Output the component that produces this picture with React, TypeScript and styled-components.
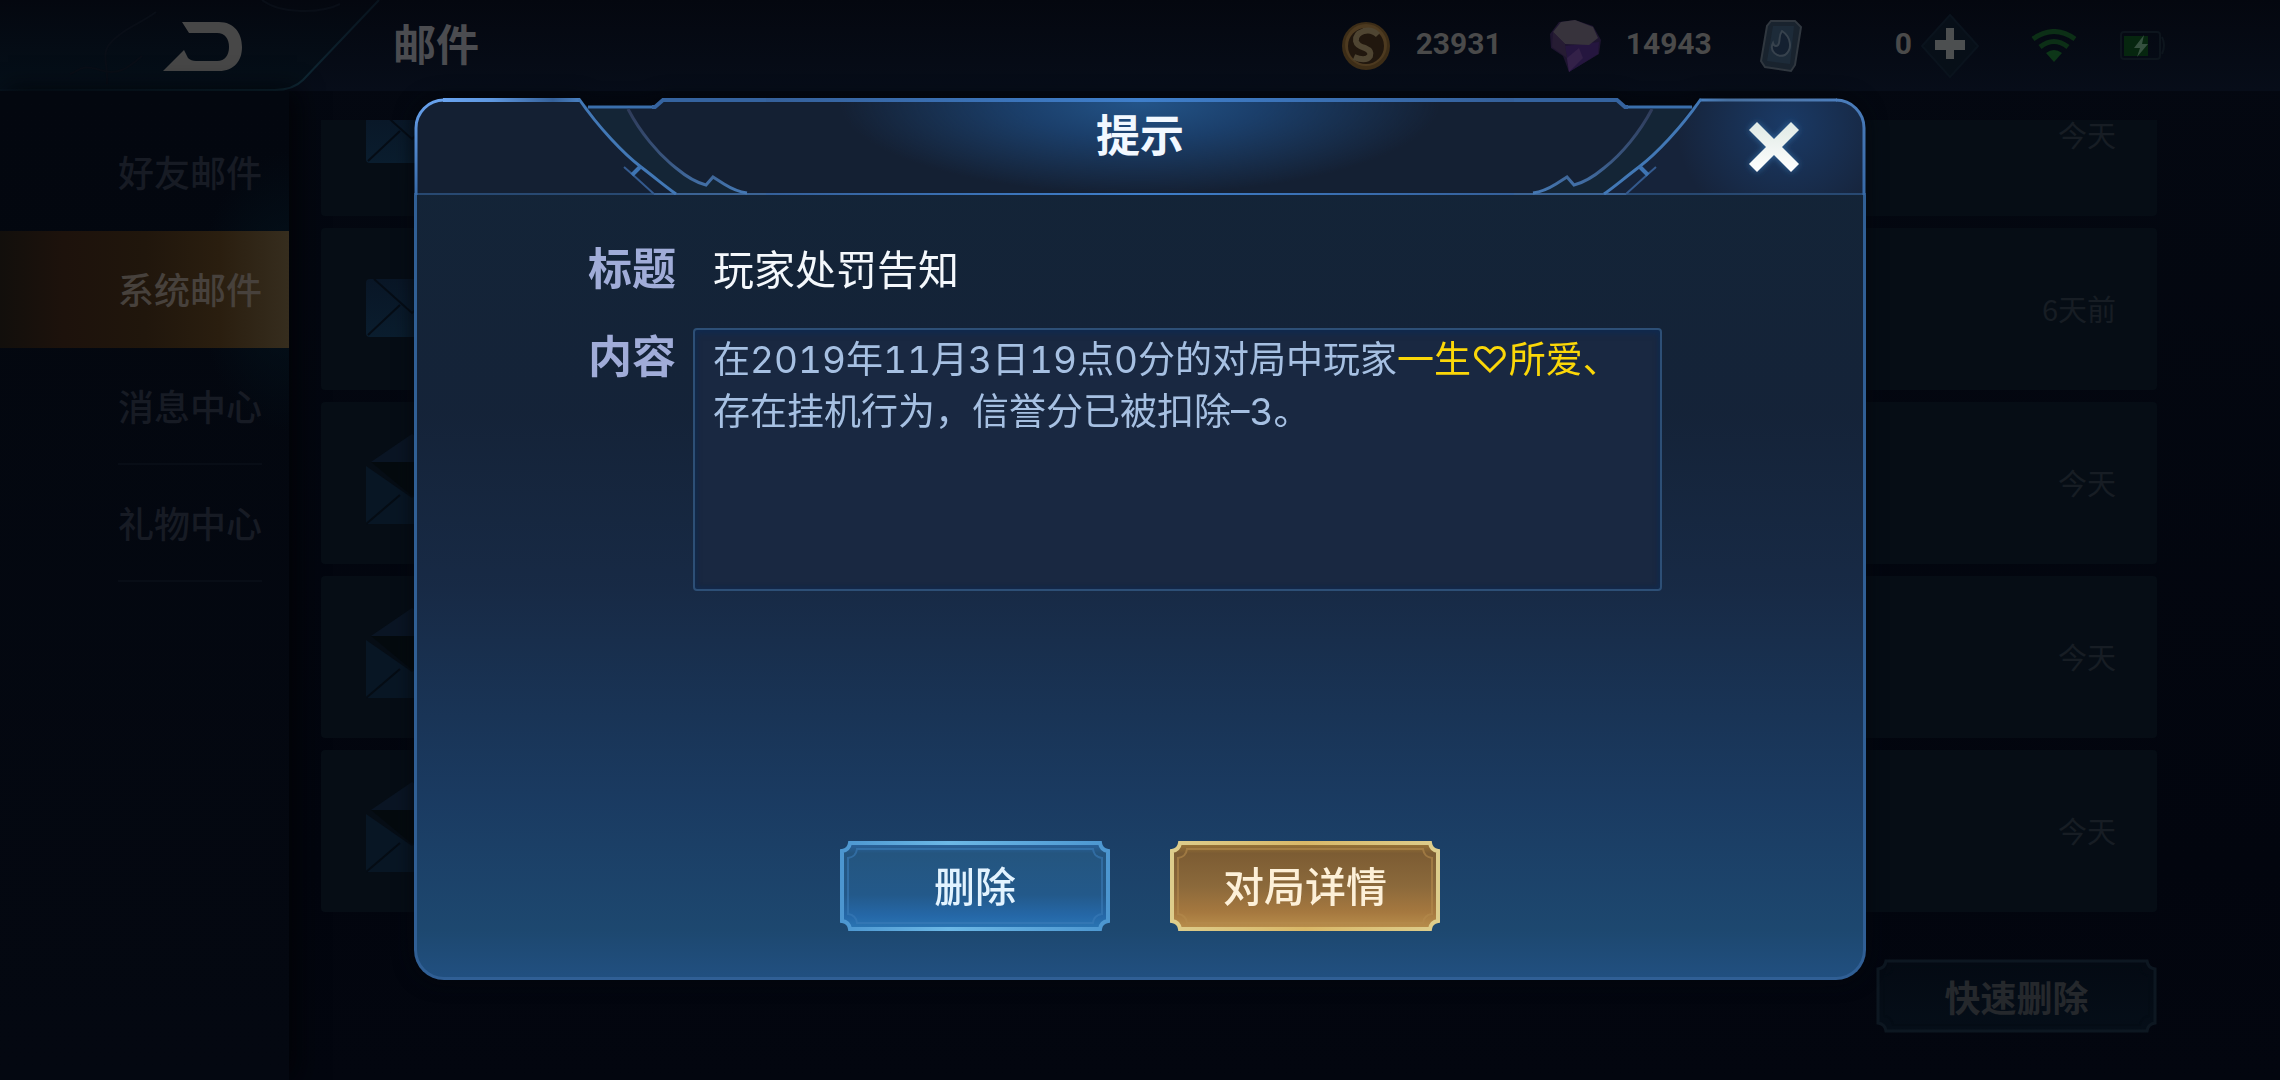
import React from "react";
import styled, { createGlobalStyle } from "styled-components";

const uiFont = `Roboto, "Noto Sans CJK SC", sans-serif`;
const textFont = `Inter, "Noto Sans CJK SC", sans-serif`;

const GlobalStyle = createGlobalStyle`
  * { box-sizing: border-box; }
  html { background: #03060f; }
  body { margin: 0; font-family: ${uiFont}; }
  button { font-family: inherit; border: 0; padding: 0; background: none; cursor: pointer; }
  h1, h2, p, ul { margin: 0; padding: 0; }
  svg { display: block; }
`;

const Page = styled.div`
  min-height: 100vh;
  display: flex;
  flex-direction: column;
  overflow: hidden;
  background: linear-gradient(180deg, #040811, #02050e 80%, #03060f);
`;

/* ---------- top bar ---------- */

const TopBar = styled.header`
  display: flex;
  align-items: center;
  height: 91px;
  padding-right: 114px;
  background: linear-gradient(180deg, #04070f, #070d19);
`;

const BackButton = styled.button`
  flex: none;
  width: 393px;
  height: 91px;
`;

const PageTitle = styled.h1`
  flex: 1;
  font-size: 43px;
  line-height: 60px;
  font-weight: 700;
  color: #4b4c50;
`;

const Wallet = styled.ul`
  display: flex;
  align-items: center;
  gap: 47px;
  list-style: none;
`;

const Currency = styled.li<{ $gap: number }>`
  display: flex;
  align-items: center;
  gap: ${(p) => p.$gap}px;
`;

const Amount = styled.span`
  padding-bottom: 4px;
  font-size: 30px;
  line-height: 36px;
  font-weight: 700;
  color: #4a4a4a;
`;

const PlusButton = styled.button`
  margin: 0 50px 0 8px;
`;

const StatusIcons = styled.div`
  display: flex;
  align-items: center;
  gap: 42px;
`;

/* ---------- side navigation ---------- */

const Content = styled.div`
  flex: 1;
  display: flex;
`;

const SideNav = styled.nav`
  flex: none;
  width: 289px;
  padding-top: 23px;
  background:
    radial-gradient(ellipse 90px 140px at 100% 200px, #04121c, transparent),
    linear-gradient(180deg, #03070f, #040811);
  box-shadow: 8px 0 24px #020307;
`;

const NavItem = styled.button<{ $active?: boolean; $ruled?: boolean }>`
  display: flex;
  justify-content: flex-end;
  width: 100%;
  height: 117px;
  padding-right: 27px;
  background: ${(p) =>
    p.$active
      ? "linear-gradient(90deg, #120f0c, #1d120c 22%, #20160c 50%, #2a1e0f 76%, #362d1e)"
      : "none"};
  font-size: 36px;
  font-weight: 500;
  color: ${(p) => (p.$active ? "#47413c" : "#171b24")};

  span {
    height: 117px;
    line-height: 122px;
    border-bottom: 2px solid ${(p) => (p.$ruled ? "#080d16" : "transparent")};
  }
`;

/* ---------- mail list ---------- */

const MailPanel = styled.main`
  flex: 1;
  display: flex;
  flex-direction: column;
  align-items: flex-end;
  padding: 29px 123px 47px 32px;
`;

const MailViewport = styled.div`
  width: 100%;
  overflow: hidden;
`;

const MailTrack = styled.ul`
  display: flex;
  flex-direction: column;
  gap: 12px;
  margin-top: -66px;
  list-style: none;
`;

const MailRow = styled.li`
  display: flex;
  align-items: center;
  height: 162px;
  padding: 0 41px 2px 45px;
  border-radius: 4px;
  background: #060d15;
`;

const MailSubject = styled.span`
  flex: 1;
  padding-left: 46px;
  font-size: 35px;
  color: #55657c;
`;

const MailAge = styled.time`
  font-family: "Noto Sans CJK SC", sans-serif;
  font-size: 29px;
  line-height: 28px;
  color: #171d24;
`;

const QuickDelete = styled.button`
  display: grid;
  place-items: center;
  margin-top: 47px;
  font-size: 36px;
  font-weight: 700;
  color: #25282c;

  > * { grid-area: 1 / 1; }
`;

/* ---------- dialog ---------- */

const DialogLayer = styled.div`
  position: fixed;
  inset: 0;
  padding: 98px 414px;
`;

const Dialog = styled.section`
  filter: drop-shadow(0 0 10px #02060c);
`;

const DialogHead = styled.header`
  display: flex;
  height: 97px;
`;

const HeadCorner = styled.div`
  flex: none;
  display: grid;
  width: 352px;

  > * { grid-area: 1 / 1; }
`;

const HeadCenter = styled.div`
  flex: 1;
  border-top: 4px solid;
  border-bottom: 2px solid;
  border-image: linear-gradient(90deg, #35609a, #3f7fcb 50%, #35609a) 1;
  background:
    radial-gradient(ellipse 300px 92px at 50% 0, #235488, #1b3f6b 40%, transparent),
    #142033;
`;

const DialogTitle = styled.h2`
  font-size: 44px;
  line-height: 70px;
  font-weight: 700;
  text-align: center;
  color: #f2f8ff;
`;

const CloseButton = styled.button`
  justify-self: end;
  display: grid;
  place-items: center;
  width: 184px;
  height: 97px;
`;

const DialogBody = styled.div`
  display: flex;
  flex-direction: column;
  gap: 28px;
  padding: 45px 201px 46px 171px;
  border: 3px solid #305f95;
  border-top: 0;
  border-radius: 0 0 30px 30px;
  background: linear-gradient(
    180deg,
    rgba(20, 37, 57, 0.97),
    rgba(21, 36, 58, 0.97) 28%,
    rgba(24, 43, 71, 0.97) 50%,
    rgba(27, 61, 101, 0.97) 78%,
    rgba(30, 74, 115, 0.97) 94%,
    rgba(34, 82, 132, 0.97)
  );
`;

const Field = styled.div`
  display: flex;
  align-items: flex-start;
`;

const FieldName = styled.div`
  flex: none;
  width: 105px;
  font-size: 44px;
  line-height: 60px;
  font-weight: 700;
  color: #a0acd8;
`;

const Subject = styled.p`
  padding-left: 20px;
  font-family: ${textFont};
  font-size: 41px;
  line-height: 60px;
  color: #f4f8fc;
`;

const Message = styled.p`
  flex: 1;
  min-height: 263px;
  padding: 4px 18px;
  border: 2px solid #2d4f76;
  border-radius: 4px;
  background: #192841;
  box-shadow: inset 0 3px 6px #0f2a50, inset 0 -2px 4px #132a4c;
  font-family: ${textFont};
  font-variant-numeric: tabular-nums;
  font-size: 37px;
  line-height: 52px;
  color: #a6c0e2;
`;

const Player = styled.span`
  color: #fbd708;
`;

const Actions = styled.footer`
  display: flex;
  justify-content: center;
  gap: 60px;
  margin: 222px 0 0 30px;
`;

const ActionButton = styled.button<{ $ink: string }>`
  display: grid;
  place-items: center;
  font-size: 41px;
  font-weight: 500;
  color: ${(p) => p.$ink};

  > * { grid-area: 1 / 1; }
  > span { padding-bottom: 5px; }
`;

/* ---------- drawings ---------- */

type Stops = [number, string][];

const plate = (w: number, h: number, i: number, c: number) =>
  `M${i + c} ${i}H${w - i - c}Q${w - i - c + 1} ${i + c - 1} ${w - i} ${i + c}V${h - i - c}` +
  `Q${w - i - c + 1} ${h - i - c + 1} ${w - i - c} ${h - i}H${i + c}` +
  `Q${i + c - 1} ${h - i - c + 1} ${i} ${h - i - c}V${i + c}Q${i + c - 1} ${i + c - 1} ${i + c} ${i}Z`;

function NotchedPlate(p: {
  id: string; w: number; h: number; fill: Stops; edge: Stops; inner: string; stroke: number;
}) {
  return (
    <svg width={p.w} height={p.h} aria-hidden="true">
      <defs>
        <linearGradient id={p.id + "-fill"} x1="0" y1="0" x2="0" y2="1">
          {p.fill.map(([o, c]) => <stop key={o} offset={o} stopColor={c} />)}
        </linearGradient>
        <linearGradient id={p.id + "-edge"} x1="0" y1="0" x2="1" y2="0">
          {p.edge.map(([o, c]) => <stop key={o} offset={o} stopColor={c} />)}
        </linearGradient>
      </defs>
      <path d={plate(p.w, p.h, 2, 8)} fill={`url(#${p.id}-fill)`} stroke={`url(#${p.id}-edge)`} strokeWidth={p.stroke} />
      <path d={plate(p.w, p.h, 8, 9)} fill="none" stroke={p.inner} strokeWidth="2" strokeOpacity="0.6" />
    </svg>
  );
}

function HeadCornerArt({ flip }: { flip?: boolean }) {
  const id = flip ? "cornerR" : "cornerL";
  return (
    <svg width="352" height="97" viewBox="0 0 352 97" aria-hidden="true">
      <defs>
        <linearGradient id={id} x1="30" y1="0" x2="166" y2="0" gradientUnits="userSpaceOnUse">
          <stop offset="0" stopColor={flip ? "#4b7dbb" : "#69a3ef"} />
          <stop offset="0.35" stopColor={flip ? "#4f78ab" : "#5f98e0"} />
          <stop offset="0.8" stopColor={flip ? "#466f9f" : "#35619a"} />
          <stop offset="1" stopColor="#4a80c0" />
        </linearGradient>
        <linearGradient id={id + "v"} x1="0" y1="0" x2="0" y2="97" gradientUnits="userSpaceOnUse">
          <stop offset="0" stopColor={flip ? "#4b7dbb" : "#69a3ef"} />
          <stop offset="1" stopColor="#376aa8" />
        </linearGradient>
        <linearGradient id={id + "c"} x1="0" y1="0" x2="0" y2="1">
          <stop offset="0" stopColor="#2f3b59" />
          <stop offset="0.6" stopColor="#39557f" />
          <stop offset="1" stopColor="#4578b3" />
        </linearGradient>
        <radialGradient id={id + "g"} cx="80" cy="26" r="110" gradientUnits="userSpaceOnUse">
          <stop offset="0" stopColor="#1a3a66" />
          <stop offset="1" stopColor="#16233a" />
        </radialGradient>
      </defs>
      <g transform={flip ? "translate(352 0) scale(-1 1)" : undefined}>
        <path d="M2 97V30A28 28 0 0 1 30 2H166L174 9H241L249 2H352V97Z" fill="#142033" />
        {flip && <path d="M3 97V30A28 28 0 0 1 30 2H166C185 30 210 56 228 70L262 96Z" fill={`url(#${id}g)`} />}
        <path d="M176 11H214C226 34 244 56 262 70C274 80 284 85 292 87L299 79L310 86L333 96H262L228 70C205 52 190 32 176 11Z" fill="#142536" />
        <path d="M0 96H240" stroke="#284972" strokeWidth="2" />
        <path d="M240 96H352" stroke="#3b6394" strokeWidth="2" />
        <path d="M2 97V30A28 28 0 0 1 30 2" fill="none" stroke={`url(#${id}v)`} strokeWidth="3" />
        <path d="M29 2H166" fill="none" stroke={`url(#${id})`} strokeWidth={flip ? 3 : 4} />
        <path d="M174 9H239" stroke="#3a6fac" strokeWidth="3" />
        <path d="M238 9H241L249 2H352" fill="none" stroke="#35639f" strokeWidth="4" />
        <path d="M165 1C185 30 210 56 227 69S252 89 262 96" fill="none" stroke="#4278b6" strokeWidth="3" />
        <path d="M214 11C226 34 244 56 262 70C274 80 284 85 292 87L299 79L310 86C318 91 326 94 333 95" fill="none" stroke={`url(#${id}c)`} strokeWidth="3" />
        <path d="M210 69L218 76L240 96" fill="none" stroke="#345a8e" strokeWidth="2" />
        <path d="M218 77L227 68" stroke="#3e74b3" strokeWidth="4" />
      </g>
    </svg>
  );
}

function CloseIcon() {
  return (
    <svg width="80" height="80" viewBox="-14 -14 80 80" aria-hidden="true">
      <defs>
        <linearGradient id="cross" x1="0" y1="0" x2="0" y2="1">
          <stop offset="0" stopColor="#dfe9e4" />
          <stop offset="1" stopColor="#ffffff" />
        </linearGradient>
        <filter id="crossGlow" x="-40%" y="-40%" width="180%" height="180%">
          <feGaussianBlur stdDeviation="3" />
        </filter>
      </defs>
      <path d="M9 1L26 18L43 1L51 9L34 26L51 43L43 51L26 34L9 51L1 43L18 26L1 9Z" fill="#34699f" filter="url(#crossGlow)" />
      <path d="M9 1L26 18L43 1L51 9L34 26L51 43L43 51L26 34L9 51L1 43L18 26L1 9Z" fill="url(#cross)" />
    </svg>
  );
}

function BackArt() {
  return (
    <svg width="393" height="91" viewBox="0 0 393 91" aria-hidden="true">
      <defs>
        <linearGradient id="backFill" x1="0" y1="0" x2="0" y2="1">
          <stop offset="0" stopColor="#04070f" />
          <stop offset="1" stopColor="#05101a" />
        </linearGradient>
        <linearGradient id="backEdge" x1="0" y1="0" x2="1" y2="0">
          <stop offset="0" stopColor="#07131e" />
          <stop offset="0.75" stopColor="#102b38" />
          <stop offset="1" stopColor="#08131d" />
        </linearGradient>
      </defs>
      <path d="M0 0H379L303 80Q293 90 275 90H0Z" fill="url(#backFill)" />
      <path d="M379 0L303 80Q293 90 275 90H0" fill="none" stroke="url(#backEdge)" strokeWidth="2" />
      <path d="M156 12C140 24 120 30 108 46C102 56 108 64 107 84M142 56C128 68 118 76 100 70S80 70 70 74M262 0C280 14 320 14 340 4" fill="none" stroke="#090e17" strokeWidth="2" />
      <path d="M182 22H219C234 22 242 33 242 47S234 71 219 71H163L184 50L188 58Q191 61 196 61H217C225 61 229 55 229 47S225 33 217 33H189Z" fill="#474747" />
    </svg>
  );
}

function CoinIcon() {
  return (
    <svg width="50" height="52" viewBox="0 0 50 52" aria-hidden="true">
      <circle cx="25" cy="26" r="24" fill="#3d2d17" />
      <circle cx="25" cy="25" r="21" fill="#4d3a20" />
      <circle cx="25" cy="26" r="18" fill="#21170e" />
      <path d="M37 15Q31 9 23 11Q14 14 15 21Q16 26 24 28Q31 31 29 36Q25 42 13 37" fill="none" stroke="#4f4532" strokeWidth="6" />
    </svg>
  );
}

function GemIcon() {
  return (
    <svg width="52" height="52" viewBox="0 0 52 52" aria-hidden="true">
      <path d="M1 14L10 2L26 0L44 6L52 20L50 34L20 52L14 36L2 28Z" fill="#1e1530" />
      <path d="M16 26L50 22L49 34L20 52Z" fill="#25163f" />
      <path d="M4 12L12 2L26 0L44 7L49 18L40 25L16 24Z" fill="#37333c" />
      <path d="M4 12L16 24L18 38L3 27Z" fill="#261c33" />
      <path d="M18 38L30 28L34 38L20 52Z" fill="#332148" />
    </svg>
  );
}

function CardIcon() {
  return (
    <svg width="44" height="54" viewBox="0 0 44 54" aria-hidden="true">
      <path d="M12 2H36L42 8L36 46L32 52L6 48L2 42L8 7Z" fill="#19232e" stroke="#30373f" strokeWidth="2" />
      <path d="M14 7H35L31 45L8 42Z" fill="#1d2b39" />
      <path d="M23 12C32 18 34 30 26 36C18 39 10 32 14 24C15 28 19 28 20 24C21 20 20 16 23 12Z" fill="#142030" stroke="#37424d" strokeWidth="2" />
    </svg>
  );
}

function PlusIcon() {
  return (
    <svg width="60" height="64" viewBox="0 0 60 64" aria-hidden="true">
      <path d="M30 1L58 32L30 63L2 32Z" fill="#070f18" stroke="#0a131d" strokeWidth="2" />
      <path d="M26 14H34V26H45V36H34V45H26V36H15V26H26Z" fill="#4c4f50" />
    </svg>
  );
}

function WifiIcon() {
  return (
    <svg width="48" height="34" viewBox="0 0 48 34" aria-hidden="true">
      <path d="M3 10Q24 -5 45 10" fill="none" stroke="#0c2f16" strokeWidth="5" />
      <path d="M10 18Q24 7 38 18" fill="none" stroke="#0c2f16" strokeWidth="5" />
      <path d="M16 24Q24 18 32 24L24 33Z" fill="#0d3618" />
    </svg>
  );
}

function BatteryIcon() {
  return (
    <svg width="46" height="30" viewBox="0 0 46 30" aria-hidden="true">
      <rect x="1" y="1" width="39" height="27" rx="3" fill="none" stroke="#0d151d" strokeWidth="2" />
      <path d="M42 6Q46 14 42 23" fill="none" stroke="#0d151d" strokeWidth="2" />
      <rect x="4" y="5" width="24" height="20" fill="#06260f" />
      <path d="M24 4L14 17H20L17 26L28 13H22Z" fill="#35503f" />
    </svg>
  );
}

function Envelope({ open }: { open?: boolean }) {
  return open ? (
    <svg width="92" height="96" viewBox="0 0 92 96" aria-hidden="true">
      <path d="M5 28L46 0L87 28Z" fill="#0a1524" />
      <path d="M5 28H87L46 62Z" fill="#040a0e" />
      <path d="M0 32L46 64L92 32V90H0Z" fill="#081624" />
      <path d="M0 90L34 61M92 90L58 61" stroke="#050c14" strokeWidth="2" />
    </svg>
  ) : (
    <svg width="92" height="58" viewBox="0 0 92 58" aria-hidden="true">
      <defs>
        <linearGradient id="paper" x1="0" y1="0" x2="0" y2="1">
          <stop offset="0" stopColor="#091626" />
          <stop offset="1" stopColor="#0a1d2e" />
        </linearGradient>
      </defs>
      <rect width="92" height="58" rx="4" fill="url(#paper)" />
      <path d="M8 0L46 34L84 0M2 56L34 26M90 56L58 26" fill="none" stroke="#050c15" strokeWidth="2" />
    </svg>
  );
}

/* ---------- data ---------- */

const tabs = [
  { name: "好友邮件" },
  { name: "系统邮件", active: true },
  { name: "消息中心", ruled: true },
  { name: "礼物中心", ruled: true },
];

const mails = [
  { subject: "玩家处罚告知", age: "今天", open: false },
  { subject: "活动通知", age: "6天前", open: false },
  { subject: "玩家处罚", age: "今天", open: true },
  { subject: "致大人提醒　友好交流是胜利的基础", age: "今天", open: true },
  { subject: "玩家处罚告知", age: "今天", open: true },
];

export default function App() {
  return (
    <Page>
      <GlobalStyle />
      <TopBar>
        <BackButton aria-label="返回"><BackArt /></BackButton>
        <PageTitle>邮件</PageTitle>
        <Wallet>
          <Currency $gap={25}><CoinIcon /><Amount>23931</Amount></Currency>
          <Currency $gap={25}><GemIcon /><Amount>14943</Amount></Currency>
          <Currency $gap={92}><CardIcon /><Amount>0</Amount></Currency>
        </Wallet>
        <PlusButton aria-label="充值"><PlusIcon /></PlusButton>
        <StatusIcons><WifiIcon /><BatteryIcon /></StatusIcons>
      </TopBar>

      <Content>
        <SideNav>
          {tabs.map((t) => (
            <NavItem key={t.name} $active={t.active} $ruled={t.ruled}><span>{t.name}</span></NavItem>
          ))}
        </SideNav>
        <MailPanel>
          <MailViewport>
            <MailTrack>
              {mails.map((m, i) => (
                <MailRow key={i}>
                  <Envelope open={m.open} />
                  <MailSubject>{m.subject}</MailSubject>
                  <MailAge>{m.age}</MailAge>
                </MailRow>
              ))}
            </MailTrack>
          </MailViewport>
          <QuickDelete>
            <NotchedPlate id="quick" w={281} h={74} stroke={3} inner="#040b14"
              fill={[[0, "#040a13"], [1, "#050e18"]]} edge={[[0, "#0d1721"], [1, "#0d1721"]]} />
            <span>快速删除</span>
          </QuickDelete>
        </MailPanel>
      </Content>

      <DialogLayer>
        <Dialog role="dialog" aria-modal="true" aria-labelledby="dialog-title">
          <DialogHead>
            <HeadCorner><HeadCornerArt /></HeadCorner>
            <HeadCenter><DialogTitle id="dialog-title">提示</DialogTitle></HeadCenter>
            <HeadCorner>
              <HeadCornerArt flip />
              <CloseButton aria-label="关闭"><CloseIcon /></CloseButton>
            </HeadCorner>
          </DialogHead>
          <DialogBody>
            <Field>
              <FieldName>标题</FieldName>
              <Subject>玩家处罚告知</Subject>
            </Field>
            <Field>
              <FieldName>内容</FieldName>
              <Message>
                在2019年11月3日19点0分的对局中玩家<Player>一生♡所爱、</Player>
                <br />
                存在挂机行为，信誉分已被扣除–3。
              </Message>
            </Field>
            <Actions>
              <ActionButton $ink="#e2f3ff">
                <NotchedPlate id="delete" w={270} h={90} stroke={4} inner="#3a7cb8"
                  fill={[[0, "#2a64a0"], [0.12, "#24557f"], [0.6, "#23598a"], [0.85, "#2568a8"], [1, "#2b76b4"]]}
                  edge={[[0, "#4c96d0"], [0.4, "#6cb8e6"], [1, "#4c96d0"]]} />
                <span>删除</span>
              </ActionButton>
              <ActionButton $ink="#fdf0d8">
                <NotchedPlate id="detail" w={270} h={90} stroke={4} inner="#b48a4c"
                  fill={[[0, "#9c7636"], [0.12, "#7c5c33"], [0.5, "#8b693b"], [0.8, "#a5783f"], [1, "#b98f4c"]]}
                  edge={[[0, "#ddcd8c"], [0.5, "#d9b868"], [1, "#ddcd8c"]]} />
                <span>对局详情</span>
              </ActionButton>
            </Actions>
          </DialogBody>
        </Dialog>
      </DialogLayer>
    </Page>
  );
}
